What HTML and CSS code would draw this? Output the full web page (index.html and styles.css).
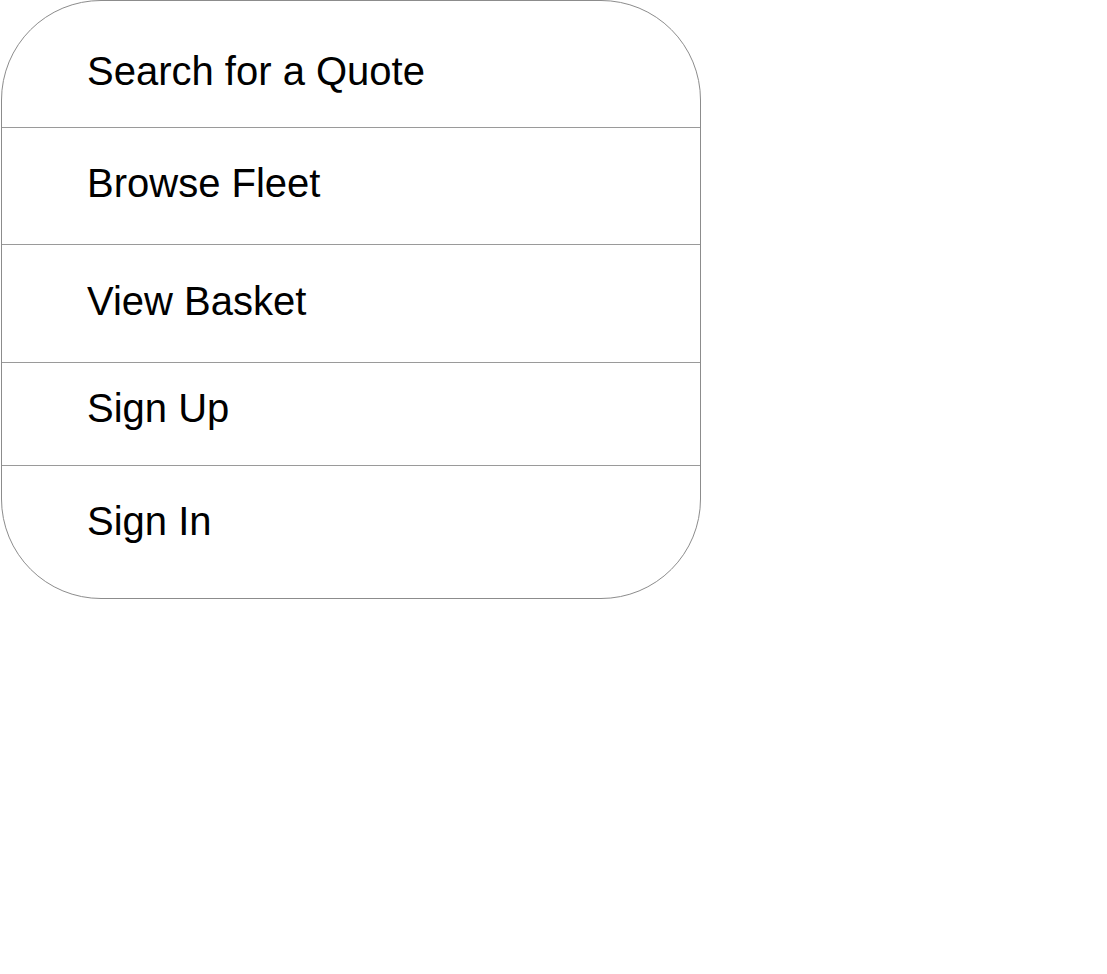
FILE: index.html
```html
<!DOCTYPE html>
<html>
<head>
<meta charset="utf-8">
<link rel="stylesheet" href="styles.css">
</head>
<body>
<nav class="menu">
  <div class="item item-1">Search for a Quote</div>
  <div class="item item-2">Browse Fleet</div>
  <div class="item item-3">View Basket</div>
  <div class="item item-4">Sign Up</div>
  <div class="item item-5">Sign In</div>
</nav>
</body>
</html>
```
FILE: styles.css
```css
html, body {
  margin: 0;
  padding: 0;
  background: #fff;
}
.menu {
  box-sizing: border-box;
  width: 700px;
  height: 599px;
  margin-left: 1px;
  border: 1px solid #8c8c8c;
  border-radius: 100px;
  display: flex;
  flex-direction: column;
  overflow: hidden;
  font-family: "Liberation Sans", Arial, sans-serif;
  font-size: 40px;
  line-height: 40px;
  color: #000;
}
.item {
  box-sizing: border-box;
  padding-left: 85px;
  flex: none;
}
.item + .item {
  border-top: 1px solid #9a9a9a;
}
.item-1 { height: 126px; padding-top: 50px; }
.item-2 { height: 117px; padding-top: 35px; }
.item-3 { height: 118px; padding-top: 36px; }
.item-4 { height: 103px; padding-top: 25px; }
.item-5 { height: 133px; padding-top: 35px; }
```
